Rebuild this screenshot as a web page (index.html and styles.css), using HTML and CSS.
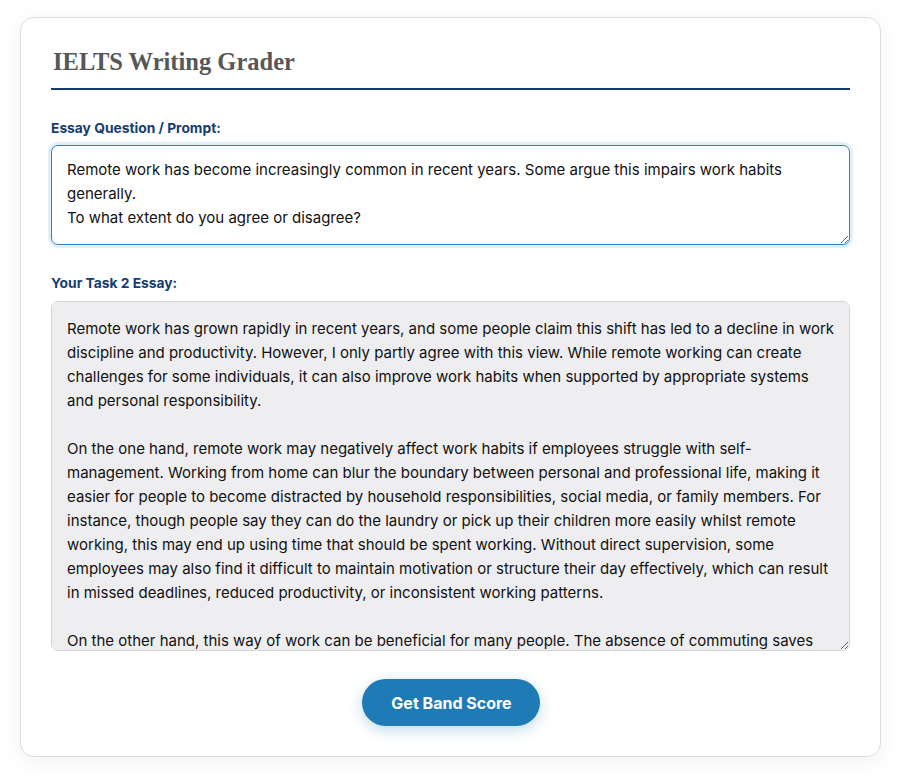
FILE: index.html
```html
<!DOCTYPE html>
<html lang="en">
<head>
<meta charset="utf-8">
<title>IELTS Writing Grader</title>
<link rel="stylesheet" href="styles.css">
</head>
<body>
<main class="card">
  <h1 class="title">IELTS Writing Grader</h1>

  <label class="field-label" for="prompt">Essay Question / Prompt:</label>
  <textarea id="prompt" class="field field-prompt is-focused" rows="3">Remote work has become increasingly common in recent years. Some argue this impairs work habits generally.
To what extent do you agree or disagree?</textarea>

  <label class="field-label field-label-essay" for="essay">Your Task 2 Essay:</label>
  <textarea id="essay" class="field field-essay">Remote work has grown rapidly in recent years, and some people claim this shift has led to a decline in work discipline and productivity. However, I only partly agree with this view. While remote working can create challenges for some individuals, it can also improve work habits when supported by appropriate systems and personal responsibility.

On the one hand, remote work may negatively affect work habits if employees struggle with self-management. Working from home can blur the boundary between personal and professional life, making it easier for people to become distracted by household responsibilities, social media, or family members. For instance, though people say they can do the laundry or pick up their children more easily whilst remote working, this may end up using time that should be spent working. Without direct supervision, some employees may also find it difficult to maintain motivation or structure their day effectively, which can result in missed deadlines, reduced productivity, or inconsistent working patterns.

On the other hand, this way of work can be beneficial for many people. The absence of commuting saves time and energy, which workers can invest in their tasks.</textarea>

  <div class="actions">
    <button class="btn-primary" type="button">Get Band Score</button>
  </div>
</main>
</body>
</html>
```

FILE: styles.css
```css
* {
  box-sizing: border-box;
}

html,
body {
  margin: 0;
  background: #ffffff;
}

body {
  padding: 17px 25px 18px 20px;
  font-family: Inter, "Noto Sans", sans-serif;
}

.card {
  display: flex;
  flex-direction: column;
  width: 861px;
  padding: 29px 30px 30px;
  background: #ffffff;
  border: 1px solid #dcdcdc;
  border-radius: 14px;
  box-shadow: 0 4px 22px rgba(0, 0, 0, 0.06);
}

.title {
  margin: 0;
  padding: 0 0 11px 2px;
  font-family: "Liberation Serif", "DejaVu Serif", serif;
  font-size: 24.5px;
  line-height: 30px;
  font-weight: bold;
  color: #575757;
  border-bottom: 2px solid #163a6e;
}

.field-label {
  display: block;
  margin: 30px 0 9px;
  font-family: Inter, "Liberation Sans", sans-serif;
  font-size: 13.8px;
  line-height: 16px;
  font-weight: 700;
  color: #173d70;
}

.field-label-essay {
  margin-top: 30px;
  margin-bottom: 10px;
}

.field {
  display: block;
  width: 100%;
  margin: 0;
  font-family: Inter, "Noto Sans", sans-serif;
  font-size: 15px;
  line-height: 24px;
  color: #111111;
  border-radius: 7px;
  outline: none;
  resize: vertical;
  scrollbar-width: none;
}

.field-prompt {
  height: 100px;
  padding: 12px 15px;
  background: #ffffff;
  border: 1px solid #2d7fc4;
}

.field-prompt.is-focused {
  box-shadow: 0 0 0 3px rgba(45, 127, 196, 0.13);
}

.field-essay {
  height: 350px;
  padding: 15px 15px 12px;
  background: #eeeef0;
  border: 1px solid #d5d5d8;
}

.actions {
  display: flex;
  justify-content: center;
  margin-top: 28px;
}

.btn-primary {
  width: 178px;
  height: 47px;
  padding: 0 0 0 2px;
  font-family: Inter, "Liberation Sans", sans-serif;
  font-size: 16px;
  font-weight: 700;
  color: #ffffff;
  background: #1f7bb6;
  border: none;
  border-radius: 24px;
  box-shadow: 0 4px 14px rgba(31, 123, 182, 0.28);
  cursor: pointer;
}
```
